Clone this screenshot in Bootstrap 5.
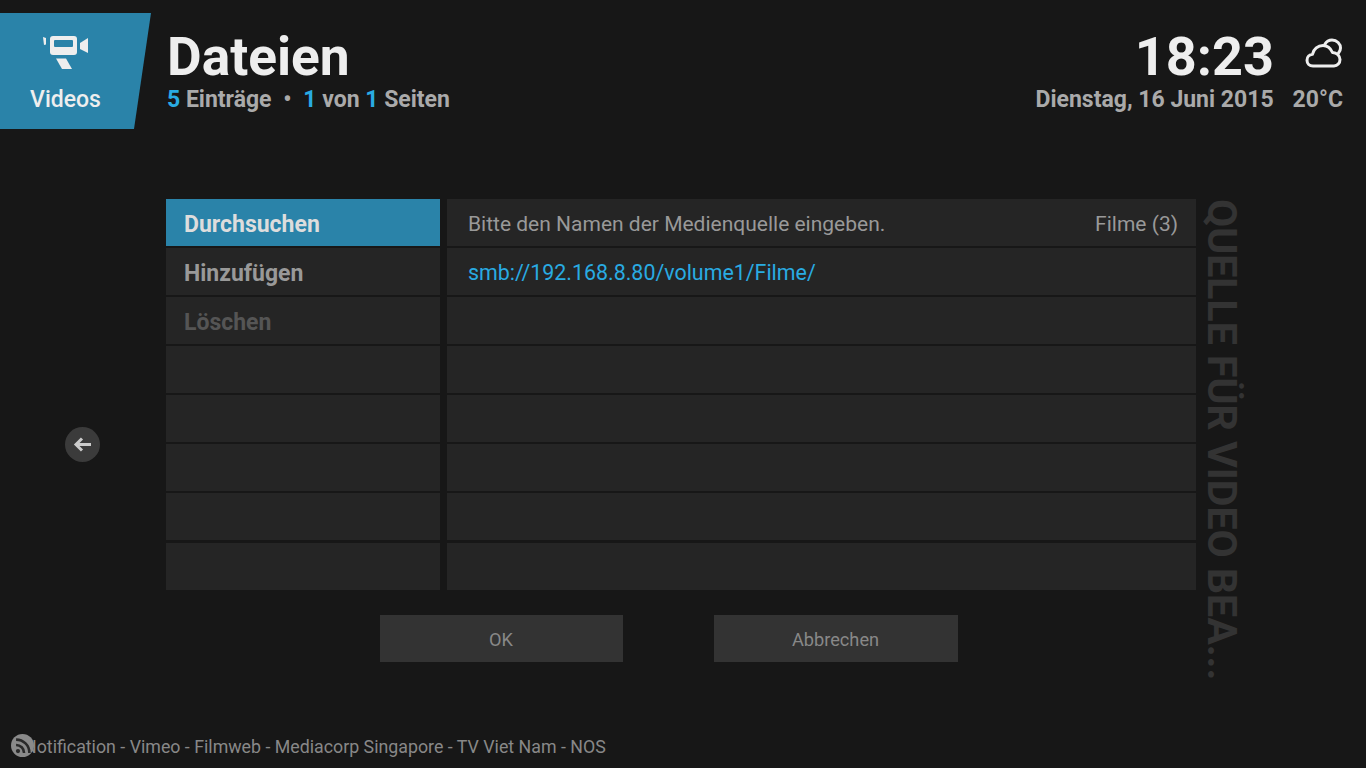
<!DOCTYPE html>
<html lang="de">
<head>
<meta charset="utf-8">
<title>Dateien</title>
<link href="https://cdn.jsdelivr.net/npm/bootstrap@5.3.0/dist/css/bootstrap.min.css" rel="stylesheet">
<style>
html,body{height:100%}
body{background:#171717;font-family:Roboto,"Liberation Sans",sans-serif;width:1366px;height:768px;overflow:hidden;position:relative}
.screen{height:768px}
.tophead{padding-top:13px;height:199px}
.tile{width:151px;height:116px;background:#2a83a9;clip-path:polygon(0 0,100% 0,134px 100%,0 100%);color:#eee}
.tile-ic{margin-top:23px;height:34px;width:131px}
.tile-tx{font-size:23px;font-weight:500;line-height:27px;margin-top:16px;width:131px;text-align:center}
.heading{margin-left:16px}
.ttl{font-size:53.300px;font-weight:700;color:#eee;line-height:56px;margin-top:16px}
.sub{font-size:23px;font-weight:700;color:#aaa;line-height:27px;margin-top:1px}
.acc{color:#29abe2}
.dot{margin:0 6px}
.clock-area{margin-left:auto;padding-right:23px;text-align:right}
.clk{font-size:54px;font-weight:700;color:#eee;line-height:56px;margin-top:16px;margin-right:69px}
.dt{font-size:23px;font-weight:700;color:#aaa;line-height:27px;margin-top:1px;white-space:pre}
.dt-gap{margin-left:19px}
.wx{position:absolute;left:1305px;top:37px}
.arrow-col{width:166px;padding:228px 0 0 65px}
.back{width:35px;height:35px;border-radius:50%;background:#3b3b3b}
.left-list{width:274px;gap:2.090px}
.right-list{width:749px;margin-left:7px;gap:2.090px}
.rw{height:47px;flex:none;background:#252525;font-size:21px;line-height:51px;color:#999}
.left-list .rw{padding-left:18px;font-weight:700;font-size:23px}
.rw.sel{background:#2a83a9;color:#ddd}
.rw.off{color:#555}
.right-list .rw{padding:0 18px 0 21px}
.right-list .url{color:#29abe2;font-size:21.400px;line-height:50px}
.vert{writing-mode:vertical-rl;font-size:41px;font-weight:700;color:#333;line-height:38px;margin-left:7px;white-space:nowrap}
.btns{margin:25px 0 0 214px;gap:91px}
.bt{width:243px;height:47px;background:#333;border:0;border-radius:0;color:#888;font-size:18.200px;line-height:50px;padding:0 1px 0 0;text-align:center}
.bt2{width:244px}
.ticker{position:absolute;left:24px;top:735px;font-size:17.800px;line-height:24px;color:#888;white-space:nowrap}
.rss{position:absolute;left:11px;top:734px;width:23px;height:23px;border-radius:50%;background:#8a8a8a}
</style>
</head>
<body>
<div class="screen d-flex flex-column">
  <header class="tophead d-flex">
    <div class="tile d-flex flex-column">
      <div class="tile-ic d-flex justify-content-center">
        <svg width="45" height="34" viewBox="0 0 45 34" fill="#eee"><path d="M0 1l3 1v6.500L1 9z"/><rect x="7" y="0" width="27" height="19" rx="3"/><rect x="11" y="4" width="19" height="7" rx="1" fill="#2a83a9"/><path d="M45 2v15l-8-4V7z"/><path d="M13 22.500h10l6 10.500H19z"/></svg>
      </div>
      <div class="tile-tx">Videos</div>
    </div>
    <div class="heading">
      <div class="ttl">Dateien</div>
      <div class="sub"><span class="acc">5</span> Einträge <span class="dot">•</span> <span class="acc">1</span> von <span class="acc">1</span> Seiten</div>
    </div>
    <div class="clock-area">
      <div class="clk">18:23</div>
      <div class="dt">Dienstag, 16 Juni 2015<span class="dt-gap">20°C</span></div>
    </div>
  </header>
  <svg class="wx" width="38" height="32" viewBox="0 0 38 32" fill="none" stroke="#eee" stroke-width="3" stroke-linejoin="round" stroke-linecap="round"><path d="M8 29C4.500 29 2 26.500 2 23.200 2 20 4.500 17.500 7.500 17.300 8.500 12 13 8.500 18 8.500 22.500 8.500 25.500 11 27.500 15.500 32 15.500 35 19 35 22.500 35 26 32.500 29 29 29z"/><path d="M20 7C21.500 4.500 24.500 3 27 3 32 3 35.500 7 35.500 11 35.500 13 34.800 14.500 33.500 16"/></svg>
  <main class="d-flex">
    <div class="arrow-col">
      <div class="back d-flex align-items-center justify-content-center">
        <svg width="19" height="15" viewBox="0 0 19 15" fill="none" stroke="#ccc" stroke-width="3"><path d="M18 7.500H3M9 1.500L3 7.500l6 6"/></svg>
      </div>
    </div>
    <div>
      <div class="d-flex" style="height:391px">
        <div class="left-list d-flex flex-column">
          <div class="rw sel">Durchsuchen</div>
          <div class="rw">Hinzufügen</div>
          <div class="rw off">Löschen</div>
          <div class="rw"></div><div class="rw"></div><div class="rw"></div><div class="rw"></div><div class="rw"></div>
        </div>
        <div class="right-list d-flex flex-column">
          <div class="rw d-flex justify-content-between"><span>Bitte den Namen der Medienquelle eingeben.</span><span>Filme (3)</span></div>
          <div class="rw url">smb://192.168.8.80/volume1/Filme/</div>
          <div class="rw"></div><div class="rw"></div><div class="rw"></div><div class="rw"></div><div class="rw"></div><div class="rw"></div>
        </div>
        <div class="vert">QUELLE FÜR VIDEO BEA...</div>
      </div>
      <div class="btns d-flex">
        <button class="btn bt">OK</button>
        <button class="btn bt bt2">Abbrechen</button>
      </div>
    </div>
  </main>
  <div class="ticker">Notification - Vimeo - Filmweb - Mediacorp Singapore - TV Viet Nam - NOS</div>
  <div class="rss d-flex align-items-center justify-content-center">
    <svg width="16" height="16" viewBox="0 0 15 15" fill="none" stroke="#2a2a2a" stroke-width="2.400"><path d="M1 1.500c7 0 12.500 5.500 12.500 12.500M1 6.500c4.200 0 7.500 3.300 7.500 7.500"/><circle cx="2.800" cy="12.200" r="2" fill="#2a2a2a" stroke="none"/></svg>
  </div>
</div>
</body>
</html>
